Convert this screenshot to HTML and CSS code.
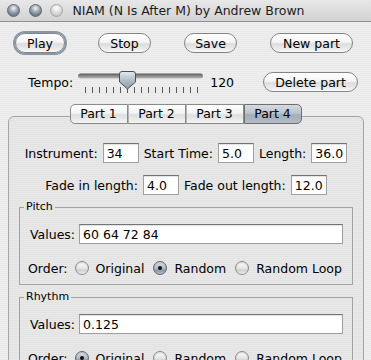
FILE: index.html
```html
<!DOCTYPE html>
<html lang="en">
  <head>
    <meta charset="utf-8" />
    <title>NIAM (N Is After M) by Andrew Brown</title>
    <link rel="stylesheet" href="styles.css">
  </head>

  <body>
    <div class="window">
      <div class="titlebar">
        <span class="light"></span>
        <span class="light"></span>
        <span class="light light-off"></span>
        <span class="title">NIAM (N Is After M) by Andrew Brown</span>
      </div>

      <div class="content">
        <div class="toolbar">
          <button class="btn btn-default btn-play">Play</button>
          <button class="btn btn-stop">Stop</button>
          <button class="btn btn-save">Save</button>
          <button class="btn btn-new">New part</button>
        </div>

        <div class="tempo-row">
          <span class="tempo-label">Tempo:</span>
          <svg class="slider" width="130" height="24" viewBox="0 0 130 24">
            <defs>
              <linearGradient id="track" x1="0" y1="0" x2="0" y2="1">
                <stop offset="0" stop-color="#5c5c5c" />
                <stop offset="1" stop-color="#b8b8b8" />
              </linearGradient>
              <linearGradient id="thumb" x1="0" y1="0" x2="0" y2="1">
                <stop offset="0" stop-color="#e6eaef" />
                <stop offset="0.5" stop-color="#b3bcc8" />
                <stop offset="1" stop-color="#8e99a8" />
              </linearGradient>
            </defs>
            <rect x="2" y="3.5" width="125" height="5" rx="2.5" fill="url(#track)" />
            <g stroke="#5a5a5a" stroke-width="1">
              <line x1="9.5" y1="17" x2="9.5" y2="23" />
              <line x1="16.5" y1="17" x2="16.5" y2="23" />
              <line x1="23.5" y1="17" x2="23.5" y2="23" />
              <line x1="30.5" y1="17" x2="30.5" y2="23" />
              <line x1="37.5" y1="17" x2="37.5" y2="23" />
              <line x1="44.5" y1="17" x2="44.5" y2="23" />
              <line x1="51.5" y1="17" x2="51.5" y2="23" />
              <line x1="58.5" y1="17" x2="58.5" y2="23" />
              <line x1="65.5" y1="17" x2="65.5" y2="23" />
              <line x1="72.5" y1="17" x2="72.5" y2="23" />
              <line x1="79.5" y1="17" x2="79.5" y2="23" />
              <line x1="86.5" y1="17" x2="86.5" y2="23" />
              <line x1="93.5" y1="17" x2="93.5" y2="23" />
              <line x1="100.5" y1="17" x2="100.5" y2="23" />
              <line x1="107.5" y1="17" x2="107.5" y2="23" />
              <line x1="114.5" y1="17" x2="114.5" y2="23" />
              <line x1="121.5" y1="17" x2="121.5" y2="23" />
            </g>
            <path d="M46 1.5 h11 a2.5 2.5 0 0 1 2.5 2.5 v8 l-8 7 l-8 -7 v-8 a2.5 2.5 0 0 1 2.5 -2.5 z"
                  fill="url(#thumb)" stroke="#4e4e4e" stroke-width="1" />
          </svg>
          <span class="tempo-value">120</span>
          <button class="btn btn-delete">Delete part</button>
        </div>

        <div class="tabs">
          <span class="tab">Part 1</span>
          <span class="tab">Part 2</span>
          <span class="tab">Part 3</span>
          <span class="tab tab-selected">Part 4</span>
        </div>

        <div class="panel">
          <div class="field-row">
            <label>Instrument:</label>
            <input class="text-input input-short" value="34">
            <label>Start Time:</label>
            <input class="text-input input-short" value="5.0">
            <label>Length:</label>
            <input class="text-input input-short" value="36.0">
          </div>
          <div class="field-row field-row-second">
            <label>Fade in length:</label>
            <input class="text-input input-short" value="4.0">
            <label>Fade out length:</label>
            <input class="text-input input-short" value="12.0">
          </div>

          <fieldset class="group">
            <legend>Pitch</legend>
            <div class="values-row">
              <label>Values:</label>
              <input class="text-input input-wide" value="60 64 72 84">
            </div>
            <div class="order-row">
              <span class="order-label">Order:</span>
              <span class="radio"><span class="radio-dot"></span>Original</span>
              <span class="radio"><span class="radio-dot radio-checked"></span>Random</span>
              <span class="radio"><span class="radio-dot"></span>Random Loop</span>
            </div>
          </fieldset>

          <fieldset class="group">
            <legend>Rhythm</legend>
            <div class="values-row">
              <label>Values:</label>
              <input class="text-input input-wide" value="0.125">
            </div>
            <div class="order-row">
              <span class="order-label">Order:</span>
              <span class="radio"><span class="radio-dot radio-checked"></span>Original</span>
              <span class="radio"><span class="radio-dot"></span>Random</span>
              <span class="radio"><span class="radio-dot"></span>Random Loop</span>
            </div>
          </fieldset>
        </div>
      </div>
    </div>
  </body>
</html>
```

FILE: styles.css
```css
html {
  height: 100%;
}

body {
  margin: 0;
  height: 100%;
  overflow: hidden;
  font-family: "DejaVu Sans", sans-serif;
  font-size: 12.5px;
  color: #000;
  background: #ececec;
}

.window {
  width: 371px;
  height: 360px;
  overflow: hidden;
  background: repeating-linear-gradient(to bottom, #eeeeee 0, #eeeeee 1px, #e9e9e9 1px, #e9e9e9 2px);
}

/* Title bar
 * ========= */

.titlebar {
  height: 22px;
  box-sizing: border-box;
  display: flex;
  align-items: center;
  padding-left: 7px;
  border-bottom: 1px solid #8e8e8e;
  background: linear-gradient(to bottom, #e7e7e7, #d3d3d3);
}

.light {
  width: 13px;
  height: 13px;
  margin-right: 8.5px;
  border-radius: 50%;
  box-sizing: border-box;
  border: 1px solid #5f6670;
  background: radial-gradient(circle at 50% 30%, #f4f6f8 0, #a9b2bd 35%, #6c7785 75%, #9aa4b0 100%);
}

.light-off {
  border-color: #a6a6a6;
  background: radial-gradient(circle at 50% 30%, #ffffff 0, #e2e2e2 40%, #c4c4c4 80%, #dcdcdc 100%);
}

.title {
  margin-left: 1px;
  color: #1c1c1c;
}

/* Controls
 * ======== */

.content {
  padding-top: 11px;
}

.toolbar {
  display: flex;
  justify-content: space-between;
  padding: 0 18px 0 15px;
}

.btn {
  height: 20px;
  box-sizing: border-box;
  padding: 0;
  border: 1px solid #858585;
  border-radius: 10px;
  font: inherit;
  line-height: 17px;
  color: #000;
  text-align: center;
  background: linear-gradient(to bottom, #ffffff 0%, #f4f4f4 45%, #dcdcdc 55%, #ececec 85%, #fafafa 100%);
}

.btn-default {
  box-shadow: 0 0 0 2px rgba(104, 122, 146, 0.75);
}

.btn-play {
  width: 50px;
}

.btn-stop,
.btn-save {
  width: 53px;
}

.btn-new {
  width: 83px;
}

.btn-delete {
  width: 95px;
  margin-left: auto;
}

.tempo-row {
  display: flex;
  align-items: center;
  height: 24px;
  margin-top: 17px;
  padding: 0 13px 0 28px;
}

.slider {
  display: block;
  margin-left: 3px;
}

.tempo-value {
  margin-left: 4px;
}

/* Tabs
 * ==== */

.tabs {
  position: relative;
  z-index: 1;
  display: flex;
  justify-content: center;
  margin-top: 10px;
}

.tab {
  width: 58px;
  height: 20px;
  box-sizing: border-box;
  border: 1px solid #8a8a8a;
  border-left: 1px solid #b5b5b5;
  line-height: 18px;
  text-align: center;
  background: linear-gradient(to bottom, #ffffff 0%, #f3f3f3 45%, #dedede 55%, #f4f4f4 100%);
}

.tab:first-child {
  border-left-color: #8a8a8a;
  border-radius: 5px 0 0 5px;
}

.tab:last-child {
  border-radius: 0 5px 5px 0;
}

.tab-selected {
  border-color: #6f6f6f;
  background: linear-gradient(to bottom, #d6dbe1 0%, #bcc3cc 45%, #a3acb8 55%, #b3bbc6 100%);
}

.panel {
  height: 260px;
  margin: -8px 7px 0 8px;
  padding-top: 26px;
  border: 1px solid #a5a5a5;
  border-radius: 6px;
  background: repeating-linear-gradient(to bottom, #e8e8e8 0, #e8e8e8 1px, #e3e3e3 1px, #e3e3e3 2px);
}

.field-row {
  display: flex;
  justify-content: center;
  align-items: center;
  gap: 5px;
}

.field-row-second {
  margin-top: 12px;
}

.text-input {
  height: 20px;
  box-sizing: border-box;
  margin: 0;
  padding: 0 3px;
  border: 1px solid #a0a0a0;
  border-top-color: #737373;
  font: inherit;
  color: #000;
  background: #fff;
  box-shadow: inset 0 1px 1px rgba(0, 0, 0, 0.12);
}

.input-short {
  width: 36px;
}

.input-wide {
  flex: 1;
  min-width: 0;
}

/* Group boxes
 * =========== */

.group {
  min-width: 0;
  margin: 5px 10px 0;
  padding: 10px 9px 6px 10px;
  border: 1px solid #a3a3a3;
}

.group legend {
  margin-left: -6px;
  padding: 0 2px;
  font-size: 11px;
  line-height: 14px;
}

.values-row {
  display: flex;
  align-items: center;
  gap: 4px;
}

.order-row {
  display: flex;
  align-items: center;
  height: 20px;
  margin-top: 14px;
  white-space: nowrap;
}

.order-label {
  margin-left: -2px;
  margin-right: 7px;
}

.radio {
  display: flex;
  align-items: center;
  gap: 7px;
  margin-right: 9px;
}

.radio:last-child {
  margin-right: 0;
}

.radio-dot {
  flex: none;
  width: 14px;
  height: 14px;
  box-sizing: border-box;
  display: flex;
  justify-content: center;
  align-items: center;
  border: 1px solid #8a8a8a;
  border-radius: 50%;
  background: linear-gradient(to bottom, #fdfdfd 0%, #e6e6e6 50%, #cfcfcf 70%, #f2f2f2 100%);
  box-shadow: inset 0 1px 1px rgba(0, 0, 0, 0.15);
}

.radio-checked {
  border-color: #5d6673;
  background: linear-gradient(to bottom, #dfe3e8 0%, #b4bcc7 50%, #8d98a7 70%, #b9c1cc 100%);
}

.radio-checked::after {
  content: "";
  width: 4px;
  height: 4px;
  border-radius: 50%;
  background: #111;
}
```
